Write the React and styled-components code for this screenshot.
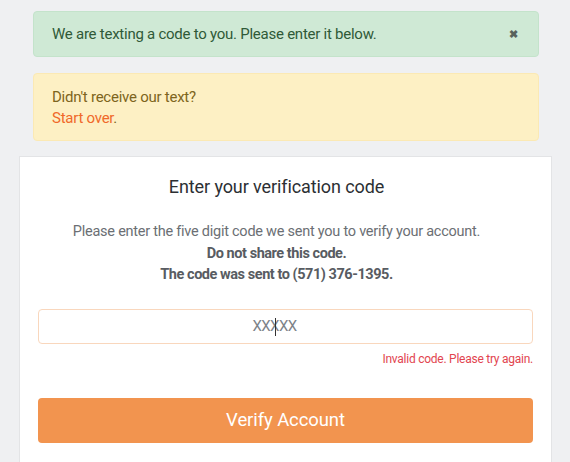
import React from "react";
import styled, { createGlobalStyle } from "styled-components";

const Global = createGlobalStyle`
  html, body { margin: 0; padding: 0; background: #eff0f2; }
  body { font-family: Roboto, "Liberation Sans", sans-serif; }
  * { box-sizing: border-box; }
`;

const Page = styled.div`
  padding: 11px 18px 0 19px;
  display: flex;
  flex-direction: column;
`;

const Alert = styled.div`
  margin: 0 13px 0 14px;
  border-radius: 4px;
  border: 1px solid ${(p) => p.$border};
  background: ${(p) => p.$bg};
  color: ${(p) => p.$color};
  font-size: 15px;
  line-height: 20px;
  letter-spacing: -0.25px;
  padding: ${(p) => p.$pad};
  display: flex;
  align-items: center;
  justify-content: space-between;
  margin-bottom: ${(p) => p.$mb}px;
`;

const AlertBody = styled.div`
  display: flex;
  flex-direction: column;
  line-height: 21px;
`;

const Close = styled.span`
  font-size: 11px;
  font-weight: 700;
  color: #58625c;
  margin-right: 2px;
  line-height: 1;
`;

const Link = styled.span`
  color: #f0692a;
`;

const Card = styled.div`
  background: #fff;
  border: 1px solid #e3e4e6;
  border-bottom: none;
  padding: 19px 18px 20px 18px;
  display: flex;
  flex-direction: column;
  align-items: center;
`;

const Title = styled.h2`
  margin: 0;
  padding-right: 18px;
  font-size: 18px;
  line-height: 22px;
  font-weight: 400;
  color: #2c2f33;
  letter-spacing: -0.1px;
`;

const Info = styled.div`
  margin-top: 23px;
  padding-right: 18px;
  text-align: center;
  color: #6b6f74;
  font-size: 14.5px;
  line-height: 21.5px;
  letter-spacing: -0.25px;
`;

const Strong = styled.div`
  font-weight: 700;
  color: #585c62;
  letter-spacing: -0.45px;
`;

const Field = styled.div`
  position: relative;
  width: 100%;
  margin-top: 23px;
`;

const Input = styled.input`
  display: block;
  width: 100%;
  height: 35px;
  padding: 0 22px 0 0;
  border: 1px solid #f9d7bd;
  border-radius: 4px;
  text-align: center;
  font-family: inherit;
  font-size: 15px;
  color: #333;
  outline: none;
  &::placeholder { color: #7d8389; opacity: 1; letter-spacing: -0.6px; }
`;

const Caret = styled.span`
  position: absolute;
  left: calc(50% - 11px);
  top: 9px;
  width: 1px;
  height: 18px;
  background: #333;
`;

const Error = styled.div`
  align-self: flex-end;
  margin-top: 8px;
  font-size: 12px;
  line-height: 15px;
  color: #e2454f;
  letter-spacing: -0.25px;
`;

const Button = styled.button`
  margin-top: 31px;
  width: 100%;
  height: 45px;
  border: none;
  border-radius: 4px;
  background: #f2944f;
  color: #fff;
  font-family: inherit;
  font-size: 18.5px;
  letter-spacing: -0.1px;
  cursor: pointer;
`;

export default function App() {
  return (
    <>
      <Global />
      <Page>
        <Alert $bg="#cfe9d5" $border="#c4e3cb" $color="#2f5a38" $pad="12px 18px 12px 18px" $mb={16}>
          <span>We are texting a code to you. Please enter it below.</span>
          <Close>✖</Close>
        </Alert>
        <Alert $bg="#fdf0c4" $border="#fbe9b4" $color="#7d6520" $pad="13px 18px 11px 18px" $mb={15}>
          <AlertBody>
            <span>Didn't receive our text?</span>
            <span><Link>Start over</Link>.</span>
          </AlertBody>
        </Alert>
        <Card>
          <Title>Enter your verification code</Title>
          <Info>
            <div>Please enter the five digit code we sent you to verify your account.</div>
            <Strong>Do not share this code.</Strong>
            <Strong>The code was sent to (571) 376-1395.</Strong>
          </Info>
          <Field>
            <Input placeholder="XXXXX" />
            <Caret />
          </Field>
          <Error>Invalid code. Please try again.</Error>
          <Button>Verify Account</Button>
        </Card>
      </Page>
    </>
  );
}
